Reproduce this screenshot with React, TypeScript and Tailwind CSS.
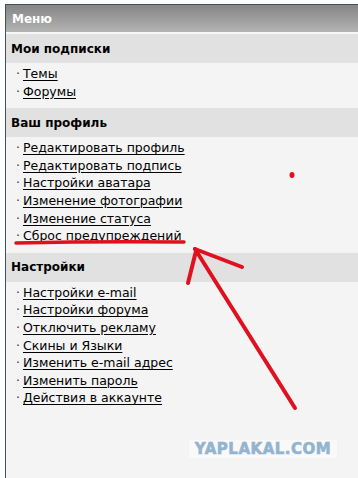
const sections = [
  { title: "Мои подписки", items: ["Темы", "Форумы"] },
  {
    title: "Ваш профиль",
    items: [
      "Редактировать профиль",
      "Редактировать подпись",
      "Настройки аватара",
      "Изменение фотографии",
      "Изменение статуса",
      "Сброс предупреждений",
    ],
  },
  {
    title: "Настройки",
    items: [
      "Настройки e-mail",
      "Настройки форума",
      "Отключить рекламу",
      "Скины и Языки",
      "Изменить e-mail адрес",
      "Изменить пароль",
      "Действия в аккаунте",
    ],
  },
]

export default function App() {
  return (
    <div className="relative h-[478px] w-[358px] overflow-hidden bg-white pl-[5px] pt-[4px] font-['DejaVu_Sans',sans-serif] text-black">
      <div className="flex h-[474px] flex-col border-l border-t border-[#3d5266] bg-[#f4f4f4]">
        {/* Title bar */}
        <div className="flex h-[27px] shrink-0 items-center bg-gradient-to-b from-[#868686] to-[#b3b3b3] pl-[6px] text-[12px] font-bold text-white">
          Меню
        </div>
        <div className="h-[2px] shrink-0 bg-[#f7f7f7]" />

        {sections.map((s, i) => (
          <div key={s.title} className={i === sections.length - 1 ? "flex flex-1 flex-col" : ""}>
            <div className="flex h-[29px] items-center bg-[#e1e1e1] pl-[5px] text-[12px] font-bold">
              {s.title}
            </div>
            <ul className="pb-[8px] pl-[10px] pt-[2px] text-[12.5px] leading-[17.6px]">
              {s.items.map((item) => (
                <li key={item} className="flex gap-[3px]">
                  <span className="text-[#333]">·</span>
                  <a className="cursor-pointer underline underline-offset-[2px]">{item}</a>
                </li>
              ))}
            </ul>
          </div>
        ))}
      </div>

      {/* watermark */}
      <div className="absolute left-[189px] top-[440px] flex h-[18px] w-[148px] items-center justify-center bg-[#f9f9f9] font-['DejaVu_Sans',sans-serif] text-[15px] font-bold tracking-[0.5px] text-[#93b4cf] [-webkit-text-stroke:0.6px_#93b4cf]">
        YAPLAKAL.COM
      </div>

      {/* red marker annotations */}
      <svg className="pointer-events-none absolute left-0 top-0" width="358" height="478" viewBox="0 0 358 478">
        <g stroke="#e0101e" strokeWidth="4" strokeLinecap="round" fill="none">
          <path d="M16 243 Q100 241 184 242" strokeWidth="3.5" />
          <path d="M295 408 L195 249" />
          <path d="M195 249 L242 267" />
          <path d="M196 251 L188 283" />
        </g>
        <ellipse cx="292" cy="175" rx="2.5" ry="3" fill="#e0101e" />
      </svg>
    </div>
  )
}
